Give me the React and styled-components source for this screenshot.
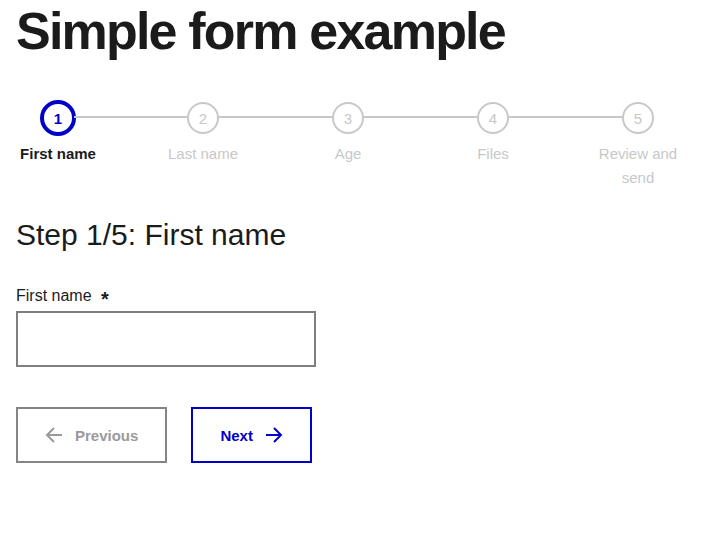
import React from "react";
import styled, { createGlobalStyle } from "styled-components";

const BLUE = "#0000c8";
const GREY = "#c8c8c8";

const steps = ["First name", "Last name", "Age", "Files", "Review and send"];

const ArrowIcon = ({ left }) => (
	<svg width='18' height='16' viewBox='0 0 18 16' fill='none' stroke='currentColor' strokeWidth='2'>
		{left ? (
			<path d='M17 8H2M9 1L2 8l7 7' />
		) : (
			<path d='M1 8h15M9 1l7 7-7 7' />
		)}
	</svg>
);

const App = () => {
	const current = 0;
	return (
		<Page>
			<GlobalStyle />
			<Title>Simple form example</Title>
			<StepList>
				{steps.map((label, i) => (
					<React.Fragment key={label}>
						{i > 0 && <Connector />}
						<Step>
							<CircleSlot>
								<Circle active={i === current}>{i + 1}</Circle>
							</CircleSlot>
							<StepLabel active={i === current}>{label}</StepLabel>
						</Step>
					</React.Fragment>
				))}
			</StepList>
			<StepHeading>Step 1/5: First name</StepHeading>
			<Field>
				<Label htmlFor='first-name'>
					First name <Required>*</Required>
				</Label>
				<Input id='first-name' type='text' />
			</Field>
			<Actions>
				<Button disabled>
					<ArrowIcon left />
					Previous
				</Button>
				<Button primary>
					Next
					<ArrowIcon />
				</Button>
			</Actions>
		</Page>
	);
};

const GlobalStyle = createGlobalStyle`
	body {
		margin: 0;
		background: #fff;
		color: #1b1b1b;
		font-family: "Liberation Sans", Arial, sans-serif;
	}
`;
const Page = styled.main`
	padding: 1px 16px 0;
`;
const Title = styled.h1`
	margin: 0;
	font-size: 52px;
	line-height: 60px;
	font-weight: 700;
	letter-spacing: -1.8px;
	color: #1b1b1b;
`;
const StepList = styled.ol`
	list-style: none;
	display: flex;
	align-items: flex-start;
	width: 616px;
	margin: 39px 0 0 24px;
	padding: 0;
`;
const Step = styled.li`
	flex: none;
	display: flex;
	flex-direction: column;
	align-items: center;
	width: 36px;
`;
const CircleSlot = styled.div`
	height: 36px;
	display: flex;
	align-items: center;
`;
const Circle = styled.span`
	box-sizing: border-box;
	display: flex;
	align-items: center;
	justify-content: center;
	width: ${(p) => (p.active ? "36px" : "32px")};
	height: ${(p) => (p.active ? "36px" : "32px")};
	border-radius: 50%;
	border: ${(p) => (p.active ? `4px solid ${BLUE}` : `2px solid ${GREY}`)};
	color: ${(p) => (p.active ? BLUE : GREY)};
	font-size: 15px;
	font-weight: ${(p) => (p.active ? 700 : 400)};
	background: #fff;
`;
const Connector = styled.span`
	flex: 1;
	height: 2px;
	margin: 16px -2px 0;
	background: ${GREY};
`;
const StepLabel = styled.span`
	flex: none;
	width: 92px;
	margin-top: 6px;
	text-align: center;
	font-size: 15px;
	line-height: 24px;
	font-weight: ${(p) => (p.active ? 700 : 400)};
	color: ${(p) => (p.active ? "#1b1b1b" : GREY)};
`;
const StepHeading = styled.h2`
	margin: 27px 0 0;
	font-size: 30px;
	line-height: 36px;
	font-weight: 400;
	color: #1b1b1b;
`;
const Field = styled.div`
	display: flex;
	flex-direction: column;
	align-items: flex-start;
	margin-top: 31px;
`;
const Label = styled.label`
	display: block;
	height: 24px;
	font-size: 16px;
	line-height: 24px;
	margin-bottom: 3px;
`;
const Required = styled.span`
	position: relative;
	top: 5px;
	margin-left: 5px;
	font-size: 20px;
	line-height: 0;
	font-weight: 700;
`;
const Input = styled.input`
	box-sizing: border-box;
	width: 300px;
	height: 56px;
	border: 2px solid #7f7f7f;
	border-radius: 0;
	padding: 0 14px;
	font: inherit;
	font-size: 16px;
	outline: none;
`;
const Actions = styled.div`
	display: flex;
	gap: 24px;
	margin-top: 40px;
`;
const Button = styled.button`
	box-sizing: border-box;
	display: flex;
	align-items: center;
	gap: 12px;
	height: 56px;
	padding: 0 27px;
	background: #fff;
	border: 2px solid ${(p) => (p.primary ? BLUE : "#858585")};
	border-radius: 0;
	color: ${(p) => (p.primary ? BLUE : "#9a9a9a")};
	font-family: inherit;
	font-size: 15px;
	font-weight: 700;
	cursor: ${(p) => (p.disabled ? "default" : "pointer")};
`;

export default App;
